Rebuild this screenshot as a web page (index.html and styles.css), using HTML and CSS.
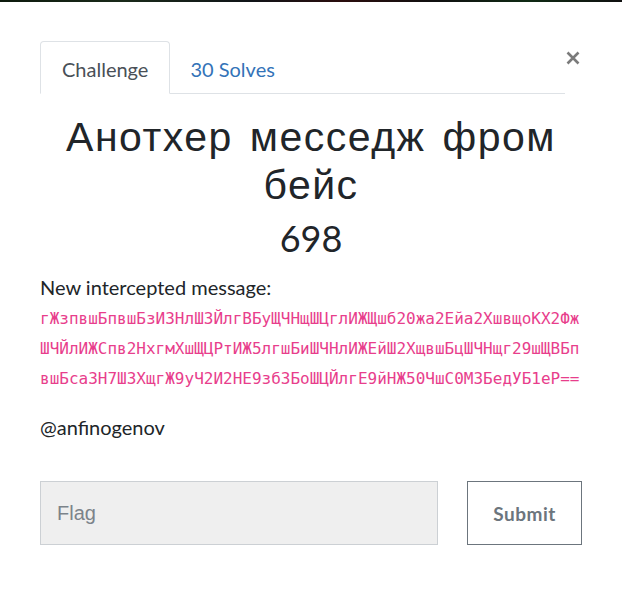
FILE: index.html
```html
<!DOCTYPE html>
<html>
<head>
<meta charset="utf-8">
<link rel="stylesheet" href="styles.css">
</head>
<body>
<div class="backdrop-strip"></div>
<div class="modal">
  <div class="header">
    <ul class="tabs">
      <li class="tab active">Challenge</li>
      <li class="tab link">30 Solves</li>
    </ul>
    <button class="close" aria-label="Close">
      <svg width="14" height="14" viewBox="0 0 14 14"><path d="M1.5 1.5 L12.5 12.5 M12.5 1.5 L1.5 12.5" stroke="#7b7b7b" stroke-width="2.6" stroke-linecap="butt"/></svg>
    </button>
  </div>
  <h2 class="title">Анотхер месседж фром бейс</h2>
  <div class="points">698</div>
  <p class="desc">New intercepted message:</p>
  <code class="cipher">гЖзпвшБпвшБзИЗНлШЗЙлгВБуЩЧНщШЦглИЖЩшб20жа2Ейа2ХшвщоКХ2Фж<br>ШЧЙлИЖСпв2НхгмХшЩЦРтИЖ5лгшБиШЧНлИЖЕйШ2ХщвшБцШЧНщг29шЩВБп<br>вшБса3Н7Ш3ХщгЖ9уЧ2И2НЕ9зб3БоШЦЙлгЕ9йНЖ50ЧшС0М3БедУБ1еР==</code>
  <p class="author">@anfinogenov</p>
  <form class="submit-row">
    <input class="flag" type="text" placeholder="Flag">
    <button class="submit" type="button">Submit</button>
  </form>
</div>
</body>
</html>
```
FILE: styles.css
```css
html, body {
  margin: 0;
  padding: 0;
  background: #fff;
}
body {
  font-family: Lato, "Liberation Sans", sans-serif;
  color: #212529;
}
.backdrop-strip {
  height: 2px;
  background: linear-gradient(90deg, #0d1a0d 0%, #1a2a1a 20%, #101418 40%, #2a0d0d 55%, #101010 70%, #0f2a14 85%, #101010 100%);
}
.modal {
  padding: 39px 40px 0 40px;
}
.header {
  display: flex;
  align-items: flex-start;
}
.tabs {
  list-style: none;
  margin: 0;
  padding: 0;
  display: flex;
  width: 525px;
  border-bottom: 1px solid #dee2e6;
}
.tab {
  font-size: 20px;
  padding: 0 21px;
  height: 51px;
  line-height: 55px;
  border: 1px solid transparent;
  border-top-left-radius: 4px;
  border-top-right-radius: 4px;
  margin-bottom: -1px;
}
.tab.active {
  color: #495057;
  border-color: #dee2e6 #dee2e6 #fff;
  background: #fff;
}
.tab.link {
  color: #3373b8;
  padding-left: 19px;
}
.close {
  border: 0;
  background: transparent;
  padding: 0;
  margin: 10px 0 0 1px;
  width: 14px;
  height: 14px;
  display: flex;
}
.title {
  font-family: "Liberation Sans", Arial, sans-serif;
  font-weight: 400;
  font-size: 41px;
  letter-spacing: 1.5px;
  word-spacing: 4px;
  line-height: 48px;
  text-align: center;
  margin: 19px 0 0 0;
  color: #212529;
}
.points {
  text-align: center;
  font-size: 36px;
  line-height: 44px;
  margin-top: 7px;
  color: #212529;
}
.desc {
  font-size: 20px;
  margin: 15px 0 0 0;
  line-height: 24px;
}
.cipher {
  display: block;
  font-family: "DejaVu Sans Mono", monospace;
  font-size: 16px;
  line-height: 30px;
  color: #e83e8c;
  margin-top: 5px;
  white-space: nowrap;
}
.author {
  font-size: 20px;
  line-height: 24px;
  margin: 21px 0 0 0;
}
.submit-row {
  display: flex;
  justify-content: space-between;
  margin-top: 42px;
  width: 542px;
}
.flag {
  box-sizing: border-box;
  width: 398px;
  height: 64px;
  background: #efefef;
  border: 1px solid #ccd0d4;
  border-radius: 0;
  padding: 0 16px;
  font-family: "Liberation Sans", Arial, sans-serif;
  font-size: 20px;
  color: #495057;
  outline: none;
}
.flag::placeholder {
  color: #7c838a;
}
.submit {
  box-sizing: border-box;
  width: 115px;
  height: 64px;
  background: #fff;
  border: 1px solid #6c757d;
  border-radius: 0;
  font-family: Lato, sans-serif;
  font-weight: 700;
  font-size: 19px;
  letter-spacing: 0.5px;
  color: #6c757d;
}
```
